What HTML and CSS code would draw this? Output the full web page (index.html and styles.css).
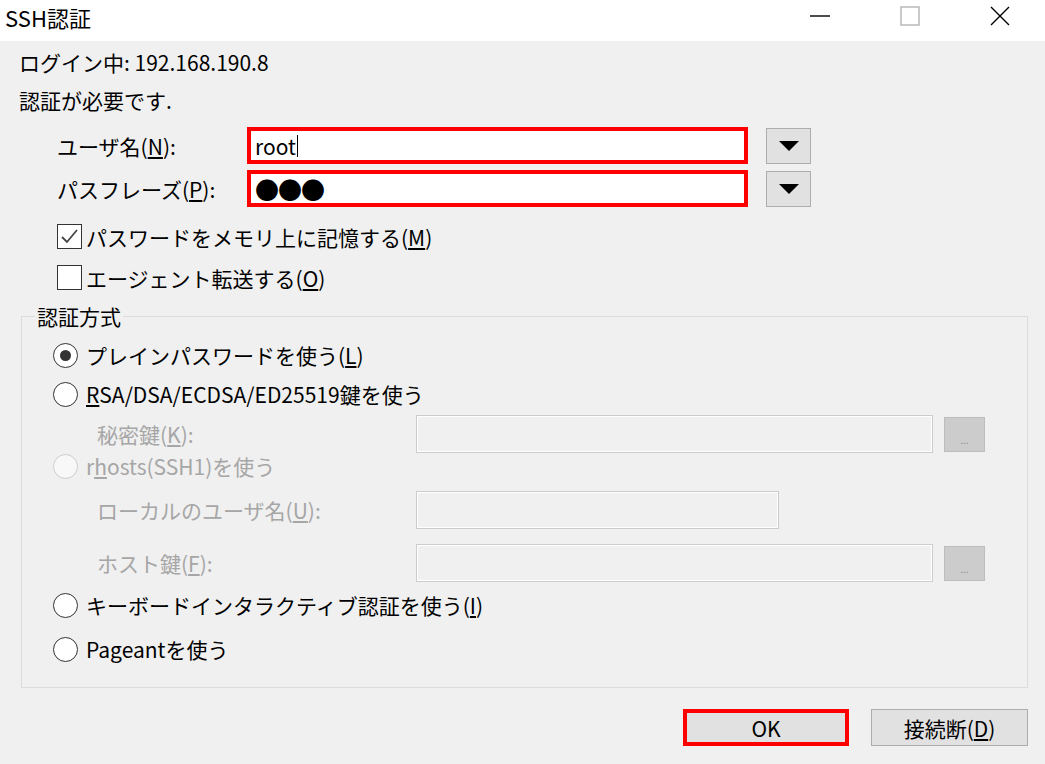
FILE: index.html
```html
<!DOCTYPE html>
<html lang="ja">

<head>
    <meta charset="UTF-8" />
    <title>SSH認証</title>
    <link rel="stylesheet" href="styles.css">
</head>

<body>
    <div class="titlebar">
        <span class="title">SSH認証</span>
        <span class="caption-btn">
            <svg width="20" height="20" viewBox="0 0 20 20"><line x1="0" y1="10" x2="20" y2="10" stroke="#000" stroke-width="1.4" /></svg>
        </span>
        <span class="caption-btn">
            <svg width="20" height="20" viewBox="0 0 20 20"><rect x="1" y="1" width="18" height="18" fill="none" stroke="#b4b4b4" stroke-width="1.4" /></svg>
        </span>
        <span class="caption-btn">
            <svg width="20" height="20" viewBox="0 0 20 20"><path d="M1 1 L19 19 M19 1 L1 19" stroke="#000" stroke-width="1.4" /></svg>
        </span>
    </div>

    <div class="content">
        <p class="info">ログイン中: 192.168.190.8</p>
        <p class="info">認証が必要です.</p>

        <div class="field-row">
            <label class="field-label">ユーザ名(<u>N</u>):</label>
            <div class="text-box">root<span class="caret"></span></div>
            <button class="drop"><svg width="20" height="10" viewBox="0 0 20 10"><polygon points="0,0 20,0 10,10" fill="#000" /></svg></button>
        </div>
        <div class="field-row">
            <label class="field-label">パスフレーズ(<u>P</u>):</label>
            <div class="text-box"><span class="dots">●●●</span></div>
            <button class="drop"><svg width="20" height="10" viewBox="0 0 20 10"><polygon points="0,0 20,0 10,10" fill="#000" /></svg></button>
        </div>

        <div class="check-row first">
            <span class="checkbox"><svg width="23" height="23" viewBox="0 0 23 23"><polyline points="4,12 9,17 19,5" fill="none" stroke="#444" stroke-width="1.8" /></svg></span>
            パスワードをメモリ上に記憶する(<u>M</u>)
        </div>
        <div class="check-row">
            <span class="checkbox"></span>
            エージェント転送する(<u>O</u>)
        </div>

        <fieldset class="group">
            <legend>認証方式</legend>
            <div class="options">
                <div class="radio-row"><span class="radio on"></span>プレインパスワードを使う(<u>L</u>)</div>
                <div class="radio-row"><span class="radio"></span><u>R</u>SA/DSA/ECDSA/ED25519鍵を使う</div>
                <div class="sub-row">
                    <span class="sub-label">秘密鍵(<u>K</u>):</span>
                    <div class="field-off"></div>
                    <span class="browse">...</span>
                </div>
                <div class="radio-row disabled"><span class="radio"></span>r<u>h</u>osts(SSH1)を使う</div>
                <div class="sub-row">
                    <span class="sub-label">ローカルのユーザ名(<u>U</u>):</span>
                    <div class="field-off short"></div>
                </div>
                <div class="sub-row">
                    <span class="sub-label">ホスト鍵(<u>F</u>):</span>
                    <div class="field-off"></div>
                    <span class="browse">...</span>
                </div>
                <div class="radio-row"><span class="radio"></span>キーボードインタラクティブ認証を使う(<u>I</u>)</div>
                <div class="radio-row"><span class="radio"></span>Pageantを使う</div>
            </div>
        </fieldset>

        <div class="actions">
            <button class="btn default">OK</button>
            <button class="btn">接続断(<u>D</u>)</button>
        </div>
    </div>
</body>

</html>
```

FILE: styles.css
```css
* {
    box-sizing: border-box;
}

body {
    margin: 0;
    width: 1045px;
    height: 764px;
    overflow: hidden;
    font-family: "Noto Sans CJK JP", "Noto Sans", sans-serif;
    font-size: 21px;
    color: #000;
    background: #f0f0f0;
}

.titlebar {
    height: 41px;
    background: #fff;
    display: flex;
    align-items: flex-start;
}

.title {
    flex: 1;
    padding-left: 5px;
    font-size: 22px;
    line-height: 34px;
}

.caption-btn {
    width: 90px;
    height: 32px;
    display: flex;
    align-items: center;
    justify-content: center;
}

.content {
    padding: 2px 17px 0 19px;
}

.info {
    margin: 0;
    height: 38px;
    line-height: 38px;
}

.field-row {
    display: flex;
    align-items: center;
    height: 37px;
    margin: 8px 0 0 38px;
}

.field-row + .field-row {
    margin-top: 6px;
}

.field-label {
    width: 190px;
}

.text-box {
    width: 501px;
    height: 37px;
    border: 4px solid #ff0000;
    background: #fff;
    padding-left: 4px;
    display: flex;
    align-items: center;
}

.caret {
    display: inline-block;
    width: 1px;
    height: 22px;
    background: #000;
    margin-left: 1px;
}

.dots {
    font-size: 24px;
    letter-spacing: -1px;
    line-height: 1;
}

.drop {
    margin-left: 18px;
    width: 45px;
    height: 36px;
    padding: 0;
    background: #e1e1e1;
    border: 1px solid #adadad;
    display: flex;
    align-items: center;
    justify-content: center;
}

.check-row {
    display: flex;
    align-items: center;
    height: 41px;
    margin-left: 38px;
}

.check-row.first {
    margin-top: 9px;
}

.checkbox {
    width: 25px;
    height: 25px;
    border: 1px solid #333;
    background: #fff;
    margin-right: 4px;
    display: flex;
}

.group {
    margin: 6px 0 0 2px;
    width: 1007px;
    padding: 0 0 15px 0;
    border: 1px solid #dcdcdc;
    min-inline-size: 0;
}

.group legend {
    margin-left: 13px;
    padding: 0 2px;
    line-height: 24px;
}

.options {
    display: grid;
    grid-template-rows: 38px 40px 40px 24px 64px 42px 42px 46px;
    padding: 8px 0 0 31px;
}

.radio-row {
    display: flex;
    align-items: center;
}

.radio {
    width: 25px;
    height: 25px;
    border-radius: 50%;
    border: 1px solid #333;
    background: #fff;
    margin-right: 8px;
    display: flex;
    align-items: center;
    justify-content: center;
}

.radio.on::after {
    content: "";
    width: 11px;
    height: 11px;
    border-radius: 50%;
    background: #333;
}

.disabled {
    color: #a6a6a6;
}

.disabled .radio {
    border-color: #cccccc;
    background: #f8f8f8;
}

.sub-row {
    display: flex;
    align-items: center;
    padding-left: 44px;
    color: #a6a6a6;
}

.sub-label {
    width: 319px;
}

.field-off {
    width: 517px;
    height: 38px;
    background: #f0f0f0;
    border: 1px solid #cccccc;
    box-shadow: inset 0 0 0 1px #fff;
}

.field-off.short {
    width: 363px;
}

.browse {
    margin-left: 11px;
    width: 41px;
    height: 35px;
    background: #cccccc;
    border: 1px solid #bdbdbd;
    font-size: 10px;
    color: #8a8a8a;
    display: flex;
    align-items: flex-end;
    justify-content: center;
    padding-bottom: 6px;
    line-height: 1;
}

.actions {
    display: flex;
    justify-content: flex-end;
    gap: 22px;
    margin-top: 21px;
}

.btn {
    width: 157px;
    height: 37px;
    padding: 0;
    font: inherit;
    color: #000;
    background: #e1e1e1;
    border: 1px solid #adadad;
}

.btn.default {
    width: 166px;
    border: 4px solid #ff0000;
}
```
